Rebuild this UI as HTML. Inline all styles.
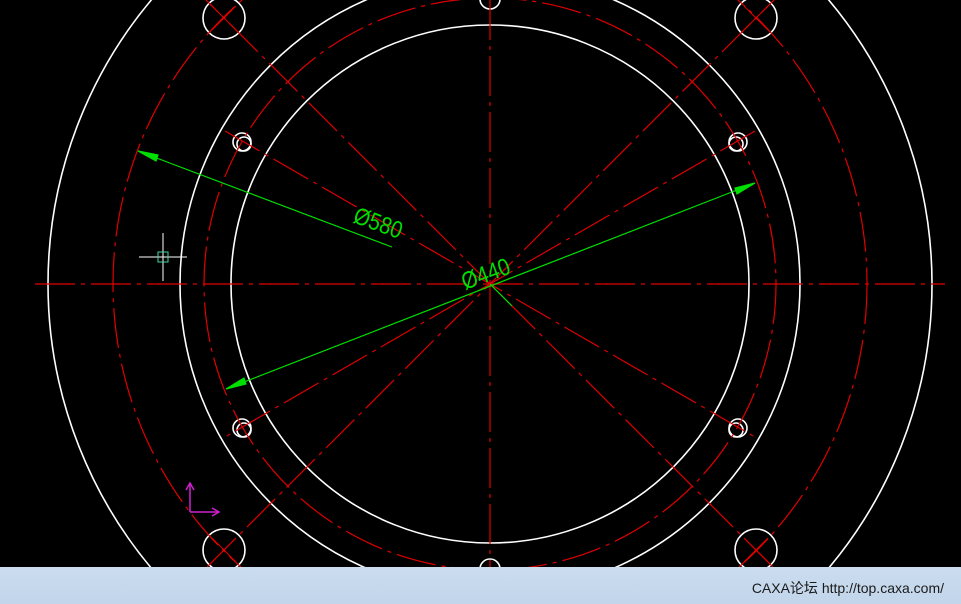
<!DOCTYPE html>
<html><head><meta charset="utf-8"><style>
html,body{margin:0;padding:0;background:#000;width:961px;height:604px;overflow:hidden}
svg{display:block;overflow:hidden}
.bar{position:absolute;left:0;top:567px;width:961px;height:37px;background:linear-gradient(#cbdcef,#c2d5ea);}
.bar span{position:absolute;right:17px;top:11px;font:14px "Liberation Sans","Noto Sans CJK SC",sans-serif;color:#1a1a1a}
</style></head><body>
<svg width="961" height="604" style="position:absolute;left:0;top:0">
<g fill="none" stroke="#fff" stroke-width="1.6">
<circle cx="490" cy="284" r="442"/>
<circle cx="490" cy="284" r="310"/>
<circle cx="490" cy="284" r="259"/>
<circle cx="224" cy="18" r="21"/><circle cx="756" cy="18" r="21"/>
<circle cx="224" cy="550" r="21"/><circle cx="756" cy="550" r="21"/>
<circle cx="490" cy="-1" r="10"/><circle cx="490" cy="569" r="10"/>
<circle cx="242" cy="142" r="9"/><circle cx="738" cy="142" r="9"/>
<circle cx="242" cy="428" r="9"/><circle cx="738" cy="428" r="9"/>
<circle cx="244" cy="144" r="7"/><circle cx="736" cy="144" r="7"/>
<circle cx="244" cy="430" r="7"/><circle cx="736" cy="430" r="7"/>
</g>
<g fill="none" stroke="#e00000" stroke-width="1.2" stroke-dasharray="40,6,4,6">
<circle cx="490" cy="284" r="377"/>
<circle cx="490" cy="284" r="286"/>
<line x1="35" y1="284" x2="945" y2="284"/>
<line x1="490" y1="0" x2="490" y2="567"/>
<line x1="190" y1="-16" x2="790" y2="584"/>
<line x1="790" y1="-16" x2="190" y2="584"/>
<line x1="225" y1="131" x2="755" y2="437"/>
<line x1="755" y1="131" x2="225" y2="437"/>
</g>
<g stroke="#e00000" stroke-width="1">
<line x1="212" y1="6" x2="236" y2="30"/><line x1="236" y1="6" x2="212" y2="30"/>
<line x1="744" y1="6" x2="768" y2="30"/><line x1="768" y1="6" x2="744" y2="30"/>
<line x1="212" y1="538" x2="236" y2="562"/><line x1="236" y1="538" x2="212" y2="562"/>
<line x1="744" y1="538" x2="768" y2="562"/><line x1="768" y1="538" x2="744" y2="562"/>
</g>
<g stroke="#00e000" stroke-width="1.2" fill="#00e000">
<line x1="138" y1="151" x2="392" y2="247"/>
<polygon points="138,151 158,155 156,161"/>
<line x1="226" y1="389" x2="755" y2="183"/>
<polygon points="226,389 244,378 246,384"/>
<polygon points="755,183 737,194 735,188"/>
<line x1="490" y1="284" x2="512" y2="306"/>
</g>
<text x="0" y="0" fill="#00e000" font-family="Liberation Sans,sans-serif" font-size="24" transform="translate(352 222) rotate(20) scale(0.85 1)">Ø580</text>
<text x="0" y="0" fill="#00e000" font-family="Liberation Sans,sans-serif" font-size="24" transform="translate(465 290) rotate(-20) scale(0.85 1)">Ø440</text>
<g stroke="#fff" stroke-width="1"><line x1="139" y1="257" x2="187" y2="257"/><line x1="163" y1="233" x2="163" y2="281"/></g>
<rect x="158" y="252" width="10" height="10" fill="none" stroke="#3fd9a0" stroke-width="1"/>
<g stroke="#d020d0" stroke-width="1.5" fill="none"><polyline points="190,512 190,484"/><polyline points="186,490 190,483 194,490"/><polyline points="190,512 218,512"/><polyline points="212,508 219,512 212,516"/></g>
</svg>
<div class="bar"><span>CAXA论坛 http://top.caxa.com/</span></div>
</body></html>
